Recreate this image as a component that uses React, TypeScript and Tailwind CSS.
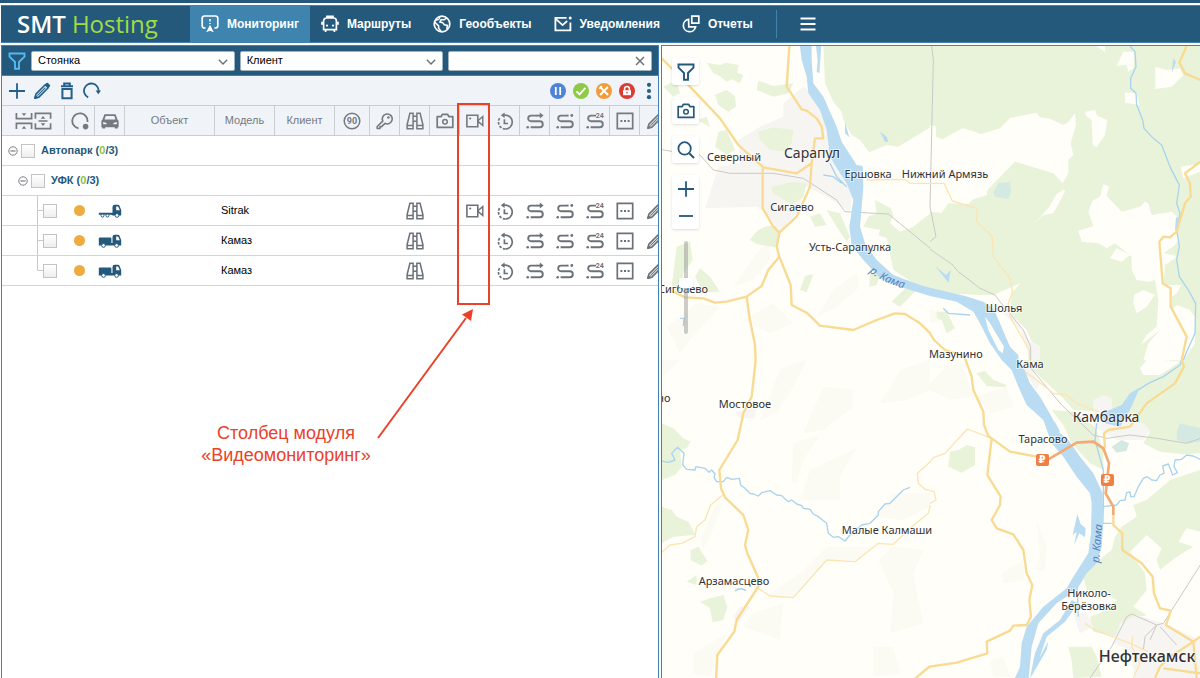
import type { ReactNode } from 'react';

type IconProps = { children: ReactNode; className?: string };

function Icon({ children, className = '' }: IconProps) {
  return (
    <svg
      viewBox="0 0 18 18"
      className={`h-[18px] w-[18px] shrink-0 ${className}`}
      fill="none"
      stroke="currentColor"
      strokeWidth="1.5"
      aria-hidden="true"
    >
      {children}
    </svg>
  );
}

const FunnelIcon = ({ className }: { className?: string }) => (
  <Icon className={className}>
    <path d="M1.5 1.5h15v3.2L11 10v6.8H7V10L1.5 4.7z" strokeWidth="1.9" />
  </Icon>
);
const CameraIcon = ({ className }: { className?: string }) => (
  <Icon className={className}>
    <path d="M1.2 15.4V4.6h4L6.3 2.4h5.4l1.1 2.2h4v10.8z" strokeWidth="1.7" strokeLinejoin="round" />
    <circle cx="9" cy="9.8" r="2.3" />
  </Icon>
);
const SearchIcon = () => (
  <Icon>
    <circle cx="7.6" cy="7.4" r="6.2" strokeWidth="1.8" />
    <path d="M12 12l5 5" strokeWidth="2" />
  </Icon>
);
const PlusIcon = () => (
  <Icon>
    <path d="M9 1.2v15.6M1 9h16" strokeWidth="1.8" />
  </Icon>
);
const MinusIcon = () => (
  <Icon>
    <path d="M2 9h14" strokeWidth="1.8" />
  </Icon>
);
const PencilIcon = () => (
  <Icon>
    <path d="M1.9 16.1l1-4L12.2 2.8l3 3L5.9 15.1z" strokeWidth="1.6" strokeLinejoin="round" />
    <path d="M4.4 13.6l8-8" strokeWidth="1.1" />
    <path d="M11.8 2.4l1.6-1.5q.8-.6 1.6.2l1.9 1.9q.7.8 0 1.6l-1.5 1.5z" fill="currentColor" stroke="none" />
    <path d="M1 17l1.2-4.4 3.2 3.2z" fill="currentColor" stroke="none" />
  </Icon>
);
const TrashIcon = () => (
  <Icon>
    <path d="M3 4.2h12M6.2 3.6V1.5h5.6v2.1" strokeWidth="2" />
    <path d="M4.4 7h9.2v9.3H4.4z" strokeWidth="2" />
  </Icon>
);
const ReloadIcon = () => (
  <Icon>
    <path d="M5.2 15.4A7.3 7.3 0 1 1 15.6 9.4" strokeWidth="1.8" />
    <path d="M12.6 8.4h5.4l-2.7 3.8z" fill="currentColor" stroke="none" />
  </Icon>
);
const CollapseIcon = () => (
  <Icon>
    <path d="M1.4 1v5.6h15.2V1M1.4 17v-5.6h15.2V17" strokeWidth="1.7" />
    <path d="M6.7 1.2h4.6L9 4zM6.7 16.8h4.6L9 14z" fill="currentColor" stroke="none" />
  </Icon>
);
const ExpandIcon = () => (
  <Icon>
    <path d="M1.4 6.8V1.4h15.2v5.4M1.4 11.2v5.4h15.2v-5.4M4.5 9h9" strokeWidth="1.7" />
    <path d="M6.7 6.8h4.6L9 4zM6.7 11.2h4.6L9 14z" fill="currentColor" stroke="none" />
  </Icon>
);
const StateIcon = () => (
  <Icon>
    <path d="M7.6 16.4A7.6 7.6 0 1 1 16.4 10" strokeWidth="1.8" />
    <circle cx="14.6" cy="14.6" r="2.8" fill="currentColor" stroke="none" />
  </Icon>
);
const CarIcon = () => (
  <Icon>
    <path
      d="M3.4 2.2h11.2l1.9 5.2 1.1 1.4v6.4h-.9v1.3h-2.9v-1.3H4.2v1.3H1.3v-1.3H.4V8.8l1.1-1.4zM4.7 4L3.5 7.4h11L13.3 4zM2.2 10v2.2h3.4v-1.3zM15.8 10v2.2h-3.4v-1.3z"
      fill="currentColor"
      fillRule="evenodd"
      stroke="none"
    />
  </Icon>
);
const NinetyIcon = () => (
  <Icon>
    <circle cx="9" cy="9" r="7.8" />
    <text x="9" y="12" textAnchor="middle" className="font-['Roboto'] text-[9px] font-bold" fill="currentColor" stroke="none">
      90
    </text>
  </Icon>
);
const KeyIcon = () => (
  <Icon>
    <path d="M6.8 9.2A5 5 0 1 1 9 11.4L5.6 14.6H4v1.9H1.2v-2z" strokeWidth="1.6" strokeLinejoin="round" />
    <circle cx="12.4" cy="5.5" r="1.3" fill="currentColor" stroke="none" />
  </Icon>
);
const BinocularsIcon = () => (
  <Icon>
    <path d="M3.9 1.3h3.2v15.4H1.1v-4zM14.1 1.3h-3.2v15.4h6v-4zM1.3 13.4h5.6M11.1 13.4h5.6M7.2 4.2h3.6M7.2 9.2h3.6" />
  </Icon>
);
const VideoIcon = () => (
  <Icon>
    <path d="M.9 3.2h10.9v11.6H.9z" strokeWidth="1.6" />
    <path d="M12.4 8.2l4.4-3.6v8.8l-4.4-3.6z" strokeWidth="1.4" />
    <circle cx="4.2" cy="6.5" r="1.1" fill="currentColor" stroke="none" />
  </Icon>
);
const HistoryIcon = () => (
  <Icon>
    <path d="M7.5 3.2H9.4A6.9 6.9 0 0 1 9.4 17" strokeWidth="1.7" />
    <path d="M9.4 17A6.9 6.9 0 0 1 2.5 10 6.9 6.9 0 0 1 4 5.6" strokeWidth="1.7" strokeDasharray="2.6 1.5" />
    <path d="M8.6.5v5.4L4.8 3.2z" fill="currentColor" stroke="none" />
    <path d="M8.4 7.2v4.3H12" strokeWidth="1.7" />
  </Icon>
);
const RouteBase = () => (
  <>
    <circle cx="1.7" cy="15.2" r="1.3" fill="currentColor" stroke="none" />
    <path d="M4.6 15.2h9.2a3 3 0 0 0 0-6H5a2.7 2.7 0 0 1 0-5.6h5" strokeWidth="1.9" />
  </>
);
const RouteIcon = () => (
  <Icon>
    <RouteBase />
    <path d="M10 3.6h5" strokeWidth="1.9" />
    <path d="M13.8.6v6l3.8-3z" fill="currentColor" stroke="none" />
  </Icon>
);
const RoutePointIcon = () => (
  <Icon>
    <RouteBase />
    <path d="M10 3.6h2.6" strokeWidth="1.9" />
    <circle cx="15.8" cy="3.5" r="1.4" fill="currentColor" stroke="none" />
  </Icon>
);
const RouteDayIcon = () => (
  <Icon>
    <RouteBase />
    <text x="9.8" y="5.8" className="font-['Roboto'] text-[7px] font-bold" fill="currentColor" stroke="none">
      24
    </text>
  </Icon>
);
const MoreBoxIcon = () => (
  <Icon>
    <path d="M1.3 1.3h15.4v15.4H1.3z" strokeWidth="1.7" />
    <path d="M4.4 9h2M8 9h2M11.6 9h2" strokeWidth="2" />
  </Icon>
);

const MonitorIcon = () => (
  <Icon>
    <path d="M4.6 13H3.4a2.2 2.2 0 0 1-2.2-2.2V3.2A2.2 2.2 0 0 1 3.4 1h11.2a2.2 2.2 0 0 1 2.2 2.2v7.6a2.2 2.2 0 0 1-2.2 2.2h-1.2" strokeWidth="1.7" />
    <path d="M9 4v2.6M9 8v1" strokeWidth="1.5" />
    <path d="M9 9.8l3.8 7.4L9 15.8l-3.8 1.4z" fill="currentColor" stroke="none" />
  </Icon>
);
const BusIcon = () => (
  <Icon>
    <path d="M6 3V1.4h6V3M5.6 3h6.8a3 3 0 0 1 3 3v8.6H2.6V6a3 3 0 0 1 3-3zM1 6.8v3M17 6.8v3M4.6 15v2M13.4 15v2" strokeWidth="1.7" />
    <circle cx="6" cy="10.6" r="1.1" fill="currentColor" stroke="none" />
    <circle cx="12" cy="10.6" r="1.1" fill="currentColor" stroke="none" />
  </Icon>
);
const GlobeIcon = () => (
  <Icon>
    <circle cx="9" cy="9" r="7.8" strokeWidth="1.7" />
    <path d="M1.6 7l4 3.8v2.4l2.6 3.4M13.8 3L11 4.8 8.2 4.6 7 7l2.6.6 1.8 2.2 3 .6-.6 3.6" strokeWidth="1.6" />
    <path d="M7.2 1.6L5.8 4.4l-3 1" strokeWidth="1.2" />
  </Icon>
);
const MailIcon = () => (
  <Icon>
    <path d="M12.6 2.8H1.4v12.6h15V7.4" strokeWidth="1.8" />
    <path d="M2 4.2l6.6 6 4.6-4.2" strokeWidth="1.7" />
    <circle cx="16.2" cy="3" r="1.5" fill="currentColor" stroke="none" />
  </Icon>
);
const ReportIcon = () => (
  <Icon>
    <path d="M6.6 4.4A6.2 6.2 0 1 0 13.6 11.8H6.8z" strokeWidth="1.7" />
    <path d="M9.8 1.2h7v7h-7z" strokeWidth="1.7" />
  </Icon>
);

const navItems = [
  { label: 'Мониторинг', icon: <MonitorIcon />, active: true },
  { label: 'Маршруты', icon: <BusIcon /> },
  { label: 'Геообъекты', icon: <GlobeIcon /> },
  { label: 'Уведомления', icon: <MailIcon /> },
  { label: 'Отчеты', icon: <ReportIcon /> },
];

function Header() {
  return (
    <header className="mt-0.5 ml-px flex h-[38px] shrink-0 items-stretch border-t border-b border-[#3f84ae] bg-[#25597c] text-white">
      <a href="#" className="flex w-[189px] items-center gap-1.5 pl-4 font-['Open_Sans'] text-2xl leading-none font-semibold">
        <span>SMT</span>
        <span className="font-medium text-[#a2dc45]">Hosting</span>
      </a>
      <nav className="flex items-stretch text-xs font-bold">
        {navItems.map((item) => (
          <a
            key={item.label}
            href="#"
            className={`flex items-center gap-2 px-[11px] ${item.active ? 'bg-[#3e84af]' : ''}`}
          >
            {item.icon}
            {item.label}
          </a>
        ))}
      </nav>
      <div className="my-1 ml-3 w-px bg-[#3f84ae]" />
      <button type="button" aria-label="Меню" className="ml-[22px] flex items-center">
        <Icon>
          <path d="M1.5 3.6h15M1.5 9h15M1.5 14.4h15" strokeWidth="2" />
        </Icon>
      </button>
    </header>
  );
}

function FilterSelect({ label, value }: { label: string; value: string }) {
  return (
    <div className="relative min-w-0 flex-1">
      <select aria-label={label} className="block h-5 w-full appearance-none rounded-xs border border-[#9fb4c2] bg-white px-1.5 text-[11px] text-black">
        <option>{value}</option>
      </select>
      <svg viewBox="0 0 10 6" className="pointer-events-none absolute top-2 right-[7px] h-1.5 w-2.5" fill="none" stroke="#6b7178" strokeWidth="1.4" aria-hidden="true">
        <path d="M.8.8L5 5 9.2.8" />
      </svg>
    </div>
  );
}

function Filters() {
  return (
    <div className="flex h-[30px] shrink-0 items-center gap-[5px] border-b border-[#3f84ae] bg-[#25597c] pr-1.5 pl-1.5">
      <button type="button" aria-label="Фильтр" className="text-[#56b8f2]">
        <FunnelIcon />
      </button>
      <FilterSelect label="Состояние" value="Стоянка" />
      <FilterSelect label="Поле поиска" value="Клиент" />
      <div className="relative min-w-0 flex-1">
        <input aria-label="Поиск" type="text" className="block h-5 w-full rounded-xs border border-[#9fb4c2] bg-white pr-5 pl-1.5 text-[11px]" />
        <button type="button" aria-label="Очистить" className="absolute top-1 right-1.5">
          <svg viewBox="0 0 12 12" className="h-3 w-3" stroke="#6b7178" strokeWidth="1.5" aria-hidden="true">
            <path d="M2 2l8 8M10 2l-8 8" />
          </svg>
        </button>
      </div>
    </div>
  );
}

const statuses = [
  { label: 'Пауза', color: 'bg-[#4f83d9]', path: <path d="M6.8 5v8M11.2 5v8" strokeWidth="1.8" /> },
  { label: 'Норма', color: 'bg-[#8fca47]', path: <path d="M4.5 9.4l3 3 6-6.6" strokeWidth="1.8" /> },
  { label: 'Ремонт', color: 'bg-[#f19c38]', path: <path d="M5.6 5.4l7.4 7.6M12.8 5l-7.6 8M4.3 6.7l2.6-2.4" strokeWidth="2" /> },
  {
    label: 'Блокировка',
    color: 'bg-[#dc3b31]',
    path: (
      <>
        <path d="M5 8.2h8v5H5z" fill="currentColor" stroke="none" />
        <path d="M6.6 8.4V6.8a2.4 2.4 0 0 1 4.8 0v1.6" />
        <path d="M9 9.8v1.6" stroke="#dc3b31" strokeWidth="1.2" />
      </>
    ),
  },
];

function Toolbar() {
  return (
    <div className="flex h-[29px] shrink-0 items-center justify-between bg-[#f0f4f8] pr-1.5 pl-1.5 text-[#235f88]">
      <div className="flex items-center gap-[7px]">
        <button type="button" aria-label="Добавить"><PlusIcon /></button>
        <button type="button" aria-label="Изменить"><PencilIcon /></button>
        <button type="button" aria-label="Удалить"><TrashIcon /></button>
        <button type="button" aria-label="Обновить"><ReloadIcon /></button>
      </div>
      <div className="flex items-center gap-[7px]">
        {statuses.map((s) => (
          <button key={s.label} type="button" aria-label={s.label} className={`flex h-4 w-4 items-center justify-center rounded-full text-white ${s.color}`}>
            <Icon>{s.path}</Icon>
          </button>
        ))}
        <button type="button" aria-label="Ещё" className="ml-1">
          <svg viewBox="0 0 6 18" className="h-[18px] w-1.5" fill="currentColor" aria-hidden="true">
            <circle cx="3" cy="2.8" r="2.1" />
            <circle cx="3" cy="9" r="2.1" />
            <circle cx="3" cy="15.2" r="2.1" />
          </svg>
        </button>
      </div>
    </div>
  );
}

function TreeToggle({ label }: { label: string }) {
  return (
    <button type="button" aria-label={label}>
      <svg viewBox="0 0 10 10" className="h-2.5 w-2.5" fill="none" stroke="#7b8085" aria-hidden="true">
        <circle cx="5" cy="5" r="4.2" />
        <path d="M2.4 5h5.2" strokeWidth="1.2" />
      </svg>
    </button>
  );
}

function Check({ label }: { label: string }) {
  return (
    <input
      type="checkbox"
      aria-label={label}
      className="h-3.5 w-3.5 shrink-0 appearance-none border border-[#c3c3c3] bg-linear-to-b from-white to-[#eeeeee] checked:bg-[#3e84af]"
    />
  );
}

const TractorTruck = () => (
  <svg viewBox="0 0 24 14" className="h-3.5 w-6" fill="#25597c" aria-hidden="true">
    <path d="M14.5 9V3q0-2.2 2.2-2.2h3.2q1.3 0 1.8 1.4L23.2 6v5.6h-8.4L13 10.8H.8V8.8h13.7z" />
    <path d="M18.2 2.6v3.6h3.6L20.4 3q-.2-.4-.6-.4z" fill="#fff" />
    <circle cx="4.5" cy="11.6" r="1.5" fill="#fff" stroke="#25597c" strokeWidth="1" />
    <circle cx="9.5" cy="11.6" r="1.5" fill="#fff" stroke="#25597c" strokeWidth="1" />
    <circle cx="19" cy="11.4" r="1.9" fill="#fff" stroke="#25597c" strokeWidth="1" />
  </svg>
);
const BoxTruck = () => (
  <svg viewBox="0 0 24 14" className="h-3.5 w-6" fill="#25597c" aria-hidden="true">
    <path d="M14.5 9V3q0-2.2 2.2-2.2h3.2q1.3 0 1.8 1.4L23.2 6v5.6H.8V4.6q0-1 1-1h10.6q1 0 1 1V9z" />
    <path d="M18.2 2.6v3.6h3.6L20.4 3q-.2-.4-.6-.4z" fill="#fff" />
    <circle cx="5.5" cy="11.4" r="1.9" fill="#fff" stroke="#25597c" strokeWidth="1" />
    <circle cx="18.6" cy="11.4" r="1.9" fill="#fff" stroke="#25597c" strokeWidth="1" />
  </svg>
);

function GroupRow({ name, nested = false }: { name: string; nested?: boolean }) {
  return (
    <tr className="h-[30px]">
      <td colSpan={17} className="border-b border-[#d4d4d4] p-0">
        <div className={`flex items-center gap-[3px] ${nested ? 'pl-4' : 'pl-1.5'}`}>
          <TreeToggle label={`Свернуть ${name}`} />
          <Check label={name} />
          <span className="ml-[3px] font-bold text-[#25597c]">
            {name} (<span className="text-[#8dc63f]">0</span>/3)
          </span>
        </div>
      </td>
    </tr>
  );
}

function ActionCell({ label, children }: { label: string; children?: ReactNode }) {
  return (
    <td className="border-b border-[#d4d4d4] p-0 text-[#6b7178]">
      {children && (
        <button type="button" aria-label={label} className="mx-auto block">
          {children}
        </button>
      )}
    </td>
  );
}

const vehicles = [
  { id: 1, model: 'Sitrak', tractor: true, video: true },
  { id: 2, model: 'Камаз', tractor: false, video: false },
  { id: 3, model: 'Камаз', tractor: false, video: false },
];

const headCell = 'border-t border-r border-b border-[#cbced1] bg-[#f0f4f8] p-0 font-normal';

const iconColumns = [
  { label: 'Скорость', icon: <NinetyIcon /> },
  { label: 'Зажигание', icon: <KeyIcon /> },
  { label: 'Слежение', icon: <BinocularsIcon /> },
  { label: 'Фото', icon: <CameraIcon /> },
  { label: 'Видео', icon: <VideoIcon /> },
  { label: 'История', icon: <HistoryIcon /> },
  { label: 'Маршрут', icon: <RouteIcon /> },
  { label: 'Маршрут до точки', icon: <RoutePointIcon /> },
  { label: 'Маршрут за сутки', icon: <RouteDayIcon /> },
  { label: 'Команды', icon: <MoreBoxIcon /> },
];

function ObjectTable() {
  return (
    <div className="overflow-hidden">
      <table className="w-[668px] table-fixed border-separate border-spacing-0 text-[11px] text-black">
        <colgroup>
          <col className="w-[63px]" />
          <col className="w-[30px]" />
          <col className="w-[30px]" />
          <col className="w-[90px]" />
          <col className="w-[60px]" />
          <col className="w-[60px]" />
          <col className="w-[35px]" />
        </colgroup>
        <thead className="text-[#747a80]">
          <tr className="h-[31px]">
            <th className={headCell}>
              <div className="flex items-center justify-center gap-px">
                <button type="button" aria-label="Свернуть все"><CollapseIcon /></button>
                <button type="button" aria-label="Развернуть все"><ExpandIcon /></button>
              </div>
            </th>
            <th className={headCell} aria-label="Состояние"><div className="flex justify-center"><StateIcon /></div></th>
            <th className={headCell} aria-label="Тип"><div className="flex justify-center"><CarIcon /></div></th>
            <th className={headCell}>Объект</th>
            <th className={headCell}>Модель</th>
            <th className={headCell}>Клиент</th>
            {iconColumns.map((c) => (
              <th key={c.label} className={headCell} aria-label={c.label}>
                <div className="flex justify-center">{c.icon}</div>
              </th>
            ))}
            <th className={headCell} aria-label="Изменить"><div className="flex justify-center"><PencilIcon /></div></th>
          </tr>
        </thead>
        <tbody>
          <GroupRow name="Автопарк" />
          <GroupRow name="УФК" nested />
          {vehicles.map((v, i) => (
            <tr key={v.id} className="h-[30px]">
              <td className="border-b border-[#d4d4d4] p-0">
                <div className="flex items-center pl-[35px]">
                  <svg viewBox="0 0 6 29" className="h-[29px] w-1.5" fill="none" stroke="#c9c9c9" aria-hidden="true">
                    <path d={i === vehicles.length - 1 ? 'M.5 0v14.5H6' : 'M.5 0v29M.5 14.5H6'} />
                  </svg>
                  <Check label={`${v.model} ${v.id}`} />
                </div>
              </td>
              <td className="border-b border-[#d4d4d4] p-0 pr-0.5"><span className="mx-auto block h-[11px] w-[11px] rounded-full bg-[#ecac3f]" /></td>
              <td className="border-b border-[#d4d4d4] p-0"><div className="flex justify-center">{v.tractor ? <TractorTruck /> : <BoxTruck />}</div></td>
              <td className="border-b border-[#d4d4d4] p-0" />
              <td className="border-b border-[#d4d4d4] p-0 pl-1.5">{v.model}</td>
              <td className="border-b border-[#d4d4d4] p-0" />
              <td className="border-b border-[#d4d4d4] p-0" />
              <td className="border-b border-[#d4d4d4] p-0" />
              <ActionCell label="Слежение"><BinocularsIcon /></ActionCell>
              <td className="border-b border-[#d4d4d4] p-0" />
              <ActionCell label="Видео">{v.video ? <VideoIcon /> : null}</ActionCell>
              <ActionCell label="История"><HistoryIcon /></ActionCell>
              <ActionCell label="Маршрут"><RouteIcon /></ActionCell>
              <ActionCell label="Маршрут до точки"><RoutePointIcon /></ActionCell>
              <ActionCell label="Маршрут за сутки"><RouteDayIcon /></ActionCell>
              <ActionCell label="Команды"><MoreBoxIcon /></ActionCell>
              <ActionCell label="Изменить"><PencilIcon /></ActionCell>
            </tr>
          ))}
        </tbody>
      </table>
    </div>
  );
}

function Callout() {
  return (
    <>
      <div className="pointer-events-none absolute top-[57px] left-[455px] h-[202px] w-[33px] border-2 border-[#ea4228]" />
      <svg viewBox="0 0 100 134" className="pointer-events-none absolute top-[261px] left-[373px] h-[134px] w-[100px]" aria-hidden="true">
        <path d="M3 131L91 11" stroke="#ea4228" strokeWidth="2" />
        <path d="M98 2L96 14 87 7.5z" fill="#ea4228" />
      </svg>
      <p className="absolute top-[376px] left-[184px] w-[200px] text-center text-lg leading-[22px] text-[#ea4228]">
        Столбец модуля «Видеомониторинг»
      </p>
    </>
  );
}

/* Map tiles are laid out as a 2x2 grid; every tile is 810x960 map units. */
function Tiles({ tiles }: { tiles: [string, string, string, string] }) {
  return (
    <>
      <path d={tiles[0]} />
      <path d={tiles[1]} transform="translate(810 0)" />
      <path d={tiles[2]} transform="translate(0 960)" />
      <path d={tiles[3]} transform="translate(810 960)" />
    </>
  );
}

const faint: [string, string, string, string] = [
  'M250 840L340 790 400 850 330 880zM20 860L110 790 180 800 90 900 60 940zM470 830L520 750 590 700 600 740 530 800zM290 640L330 600 330 660 280 720 220 740z',
  'M0 810L35 815 30 845 0 850z',
  'M300 180L360 30 400 10 440 0 400 80 350 160zM430 220L490 80 540 85 580 90 580 140 530 180 490 210zM395 370L400 250 480 225 430 300 410 370zM420 420L450 330 590 265 540 350 540 420zM660 130L720 30 810 0V90L740 120zM640 470L700 400 810 400V440L730 480zM300 720L420 640 500 560 640 560 600 600 500 600 400 710zM655 600L700 560 790 570 760 640 790 790 690 820 700 700zM640 860L700 860 720 940 640 950zM100 880L200 820 150 950 100 940zM280 760L370 730 360 840 250 800zM120 540L170 430 190 430 150 530 130 565zM0 60L60 0H0z',
  'M0 70L60 10 100 20 130 110 60 120 0 90zM140 110L230 80 250 140 180 160zM320 480L350 560 345 630 310 630 330 590zM215 640L280 600 285 660 220 670zM180 900L220 890 240 950 190 950z',
];

const greens: [string, string, string, string] = [
  'M490 18H811V262L715 320 680 315 628 337 600 300 575 285 550 240 545 215 520 185 495 130zM645 480L693 505 700 525 690 550 720 575 760 560 811 520V745L770 735 700 690 690 640 680 595 670 590 655 585 660 570 610 560 625 530 650 520zM140 68L180 75 200 68 235 75 232 98 250 105 240 130 215 118 200 125 180 108 160 100zM165 165L200 150 225 168 228 200 205 215 175 195zM290 150L295 122 340 138 400 130 385 160 340 170zM295 275L340 262 400 270 395 310 375 335 330 330 300 300zM335 440L400 425 440 430 430 470 395 495 365 475 338 460zM270 600Q300 550 350 558L360 590 345 622 290 612zM500 510L540 520 570 590 560 605 530 560zM450 530L480 520 500 555 465 560zM50 620L90 605 98 660 70 700 60 760 35 740zM120 685L150 710 180 755 130 757 105 710zM420 750L435 708 460 703 440 757zM630 700L660 705 650 735 628 740zM695 785L740 740 770 750 720 800zM10 140L50 120 60 160 40 170zM175 275L200 270 225 330 200 345 165 320zM110 240L140 230 150 260z',
  'M0 18H810V961H325L330 920 305 905 290 870 240 820 245 760 270 730 190 765 150 765 50 760 0 745z',
  'M6 190L40 205 70 235 92 245 80 265 60 270 65 320 45 345 6 360zM6 440L35 450 50 470 85 485 107 525 40 530 6 550zM92 570L115 560 142 602 125 617 92 600zM80 665L110 645 110 675zM120 725L150 715 190 705 202 740 190 780 158 787 150 745z',
  'M275 0H810V280L760 283 690 275 640 250 660 215 640 195 560 215 500 200 500 155 430 150 395 110 330 50zM365 150L430 155 495 200 520 270 520 330 480 310 425 250 400 195zM810 330L720 360 650 420 610 435 620 470 575 500 555 530 545 570 500 605 460 650 470 690 520 700 560 720 510 760 480 770 490 815 560 830 600 780 650 765 610 740 650 690 645 640 600 575 650 525 695 565 680 600 690 630 740 590 790 560 745 545 770 505 810 515zM415 860H485L500 890 515 950 430 954 425 900zM85 270L110 255 135 262V315L95 338 55 320 60 275zM140 40L165 32 190 60 230 75 225 82 170 78z',
];

const clearings: [string, string, string, string] = [
  'M0 0',
  'M0 255L18 258V290L38 298 98 264 155 282 210 265 240 234 320 218 330 232 360 236 398 254 412 250 435 220 438 255 422 310 430 345 415 360V400L398 430 370 400 255 365 170 452 172 465 130 478 115 492 55 490 35 518 0 516zM466 215L495 210 502 228 532 240 525 285 500 322 488 315 485 240 468 228zM315 550L358 500 380 462 402 448 405 455 370 520 340 525zM445 572L490 558 475 515 487 482 510 470 520 432 537 440 530 468 575 515 630 500 645 485 655 490 665 525 725 515 742 530 740 570 745 600 735 615 700 640 740 648 735 655 705 675 700 735 755 735 740 760 725 770V810L740 795 780 810 795 830V910L760 961H640L655 910 690 870 632 915 650 885 680 860 685 780 675 720 655 725 620 720 605 690 605 650 555 610 530 625 505 610 455 605zM560 78L580 35H612L610 85 595 95 590 75zM676 80L710 90 750 85 760 105 725 140 676 147zM585 158H620L628 195 585 188zM752 380L810 372V395L760 415zM540 655L560 625 600 645 575 665zM612 765L640 750 675 765 650 800 620 820 610 790zM498 18H525V35z',
  'M0 0',
  'M630 25L650 0 700 0 750 5 690 45 640 45z',
];

const towns: [string, string, string, string] = [
  'M235 300L300 260 370 230 370 190 430 140 470 170 520 340 580 440 570 515 500 470 440 440 410 520 360 575 310 510 290 500 135 505 150 460 175 380 240 370z',
  'M220 820L240 815 300 905 330 920V961H300L270 870z',
  'M225 155L290 145 285 175 240 175zM220 770L240 740 270 740 235 790z',
  'M490 120L520 105 545 115 550 180 640 190 660 210 640 240 560 240 520 215 490 200zM570 790L620 765 700 790 810 840V954H615L600 870 550 850zM430 760L470 760 490 800 450 820zM270 0L300 20 330 70 320 90 280 30z',
];

const thinRoads: [string, string, string, string] = [
  'M620 420L735 418 750 430H811',
  'M0 430H42L67 483 142 505 140 545 187 590 190 650 240 715 248 755 235 790 240 830 298 930V961',
  'M188 405L152 435 135 480 110 500 105 530 65 550 30 555 0 582M295 685L330 708 400 713 500 600 585 605 655 550 700 553 750 505 805 460 811 435M811 305L772 340 775 370 795 388 811 392',
  'M0 305L10 293 45 280 112 207 185 235M0 392L12 395 18 420 0 430M285 35L320 60 370 100 410 105 440 130 505 155M465 790L490 808 600 850 655 875M608 830L605 860 630 910 610 954',
];

const roads: [string, string, string, string] = [
  'M0 50L90 140 180 235 235 315 310 382 410 400 455 370 465 295H490L485 260 470 235 440 212 425 208 380 140 388 18M308 385V505L340 560 358 578 410 530 450 440 455 370M358 578L350 620 358 650 392 735 395 795 440 818 480 857 580 870 650 840 705 820 735 822 780 850 811 880M358 650L325 690 305 738 260 770 200 785 165 788 130 775 75 772 40 755M260 770L268 830 285 915 287 961',
  'M0 880L12 900 45 930 95 945 108 961M755 961L770 890 722 800V745L698 730 688 605 700 590 720 592 740 575 765 490 782 470 780 430 765 400 811 365M770 18L748 68 765 100 811 120',
  'M287 0L275 110 250 160 233 240 178 330 183 385 195 412 250 465 265 510 255 555 262 580 295 655V680L230 780 223 815 172 885 168 960M760 960L811 918',
  'M107 0L125 50 130 90 160 155 162 195 175 228 185 235 240 275 320 290M185 235L172 345 212 410 210 435 185 480 200 505 250 523 280 570 290 640 307 675 298 720 303 770 290 795 250 797 240 812 170 845 172 880 80 908 0 920M550 465V495L577 520V570L635 610 668 650 672 700 690 745 722 752 708 795 790 845 811 830M525 265L522 220 535 210 600 200 650 130 735 70 762 20 755 0M790 845L720 890 690 920 675 954M790 845L800 954M700 925L811 940',
];

const rails: [string, string, string, string] = [
  'M0 328L40 335 120 345 160 390 210 400H340L430 415 530 480 555 515 685 522 811 625',
  'M5 18L10 60 0 500 18 590 0 605M0 628L65 672 85 695 150 745 195 765 210 785 280 870 302 920V961',
  'M0 0',
  'M290 10L395 135 490 225 530 235 600 225 680 235 770 250 811 235M480 954L545 860 590 770 605 762 680 795 700 790 811 615M680 795L645 830 640 870M690 800L740 855M680 795L660 840',
];

const streams: [string, string, string, string] = [
  'M490 405L520 410 545 430M510 370L530 410 560 440M60 835L72 835 70 858',
  'M600 18L615 35 618 80 602 115V145L618 160 620 195 638 240 642 265 670 295 695 315 720 380 735 410 748 435 740 490 750 520 740 570 748 620 740 660 748 710 775 750 797 790 795 880 770 935 760 961M40 805L55 820 120 825',
  'M0 302L25 307 45 300 35 280 52 262 72 280 68 315 80 328 105 330 108 320 135 325 147 337 155 330 165 342 162 352 170 365 190 365 200 352 215 358 238 355 242 375 255 385 270 400 280 402 295 408 305 398 330 392 350 405 365 407 385 425 395 420 410 432 425 437 430 445 450 448 460 462 475 470 500 490 505 520 520 532 535 530 555 543 570 525 605 495 630 490 655 465V455L675 432 690 430 730 390 750 382M225 693Q240 680 258 692',
  'M755 0L750 15 700 50 655 70 625 90M518 440L560 435 570 422 585 420 590 398 600 396 602 410 612 410 625 380 640 355 652 350 665 360 680 362 690 345 702 340 698 318 715 312 728 345 742 338 732 320 735 300 755 298 770 285 790 288 811 298M500 190L495 240 520 330 520 440 518 490H545M440 640L445 770',
];

const waterBodies =
  'M420 18H455V60L460 130 490 170 530 260 545 305 590 375 608 378 610 440 605 500 600 560 615 610 650 660 700 705 780 735 810 743 915 768 970 785 1000 805 1020 850 1050 920 1075 945 1075 960 1090 980 1110 1030 1140 1070 1175 1130 1195 1175 1225 1200 1260 1250 1300 1300 1328 1360 1330 1440 1325 1520 1310 1570 1280 1600 1250 1650 1190 1690 1135 1750 1115 1820 1106 1914H1065L1080 1880 1085 1810 1100 1760 1150 1700 1220 1645 1240 1610 1285 1540 1293 1480 1295 1390 1290 1360 1250 1310 1210 1250 1175 1210 1150 1140 1100 1095 1075 1040 1055 990 1025 960 990 910 960 850 940 815 890 785 810 768 720 740 660 715 610 660 575 615 568 560 580 480 560 430 540 400 510 350 500 270 480 210 445 160 440 110 425 60z' +
  'M468 18H484L478 100 470 95 473 60zM555 245L568 292 555 280z' +
  'M1110 1914L1125 1840 1150 1780 1200 1740 1235 1680 1255 1690 1215 1745 1160 1790 1140 1850 1120 1900z' +
  'M1120 1890L1165 1803 1160 1830 1125 1890zM1440 1042L1410 1060 1385 1095 1325 1120 1335 1150 1380 1160 1410 1110z' +
  'M1252 1422L1262 1452 1277 1465 1275 1492 1258 1480 1242 1515 1250 1475 1238 1485zM1182 1140L1200 1175 1190 1180zM825 678L858 705 872 690 866 728zM1540 55L1548 65 1535 100z' +
  'M660 275L680 290 685 305 675 305zM1548 530L1560 540 1552 575 1545 570z';

type Label = { text: string; x: number; y: number; kind?: 'city' | 'big' };

const mapLabels: Label[] = [
  { text: 'Северный', x: 734, y: 161 },
  { text: 'Сарапул', x: 812, y: 158, kind: 'city' },
  { text: 'Ершовка', x: 868, y: 178 },
  { text: 'Нижний Армязь', x: 945, y: 178 },
  { text: 'Сигаево', x: 792, y: 211 },
  { text: 'Усть-Сарапулка', x: 850, y: 251 },
  { text: 'Сигбаево', x: 683, y: 293 },
  { text: 'Шолья', x: 1004, y: 312 },
  { text: 'Мазунино', x: 956, y: 358 },
  { text: 'Кама', x: 1030, y: 368 },
  { text: 'Мостовое', x: 745, y: 408 },
  { text: 'но', x: 664, y: 402 },
  { text: 'Камбарка', x: 1106, y: 422, kind: 'city' },
  { text: 'Тарасово', x: 1043, y: 443 },
  { text: 'Малые Калмаши', x: 887, y: 534 },
  { text: 'Арзамасцево', x: 734, y: 585 },
  { text: 'Николо-', x: 1089, y: 597 },
  { text: 'Берёзовка', x: 1089, y: 610 },
  { text: 'Нефтекамск', x: 1147, y: 662, kind: 'big' },
];

const labelSize = {
  town: 'text-[11px]',
  city: 'text-[14px]',
  big: 'text-[16px] font-medium',
};

function MapCanvas() {
  return (
    <svg viewBox="662 46 538 632" preserveAspectRatio="xMinYMin slice" className="h-full w-full" role="img" aria-label="Карта">
      <g transform="translate(660 40) scale(0.333333)" fill="none" strokeLinejoin="round">
        <g fill="#fbfbf3"><Tiles tiles={faint} /></g>
        <g fill="#e9f3da"><Tiles tiles={greens} /></g>
        <g fill="#fffef8"><Tiles tiles={clearings} /></g>
        <g fill="#f7f5f1"><Tiles tiles={towns} /></g>
        <path d="M295 275L340 262 400 270 395 310 375 335 330 330 300 300zM335 440L400 425 440 430 430 470 395 495 365 475 338 460z" fill="#e9f3da" />
        <path d="M830 815L860 815 885 865 860 880 845 840 830 835z" fill="#e9f3da" />
        <path d="M1000 455L1015 430 1050 425 1053 455 1045 478 1005 470zM1355 1220L1385 1200 1407 1210 1400 1232 1370 1238zM1550 1175L1560 1150 1620 1165V1205L1585 1210 1550 1200z" fill="#d4e9e2" />
        <g stroke="#c9c9c9" strokeWidth="3"><Tiles tiles={rails} /></g>
        <g stroke="#a9d3ee" strokeWidth="4"><Tiles tiles={streams} /></g>
        <path d={waterBodies} fill="#b9dcf2" />
        <path d="M975 830L990 850 1032 920 1028 940 1015 930 985 870z" fill="#fffef8" />
        <g stroke="#fbe5b4" strokeWidth="4"><Tiles tiles={thinRoads} /></g>
        <g stroke="#f9da92" strokeWidth="7"><Tiles tiles={roads} /></g>
        <path d="M1165 1258L1250 1208 1300 1205 1330 1225 1347 1270 1337 1360 1360 1400V1425" stroke="#f3aa74" strokeWidth="8" />
      </g>
      <g className="font-['Noto_Sans']" fill="#333333" stroke="#ffffff" strokeWidth="2" strokeOpacity="0.6" textAnchor="middle" paintOrder="stroke">
        {mapLabels.map((l) => (
          <text key={l.text} x={l.x} y={l.y} className={labelSize[l.kind ?? 'town']}>
            {l.text}
          </text>
        ))}
      </g>
      <g className="font-['Noto_Sans'] text-[11px] italic" fill="#5580bd">
        <path id="river-north" d="M869 272Q888 286 915 291" fill="none" />
        <path id="river-south" d="M1099 563L1103 515" fill="none" />
        <text><textPath href="#river-north">р. Кама</textPath></text>
        <text><textPath href="#river-south">р. Кама</textPath></text>
      </g>
      {[
        [1036, 454],
        [1101, 474],
      ].map(([x, y]) => (
        <g key={x}>
          <rect x={x} y={y} width="13" height="12" rx="2" fill="#f07f45" />
          <text x={x + 6} y={y + 9} textAnchor="middle" fill="#fff" className="font-['DejaVu_Sans'] text-[10px] font-bold">₽</text>
        </g>
      ))}
    </svg>
  );
}

const mapButton = 'flex h-[27px] w-[27px] items-center justify-center rounded-xs bg-white shadow-sm';

function MapPanel() {
  return (
    <section className="relative min-h-0 overflow-hidden border-t border-l border-[#3f84ae] bg-[#fffef8]">
      <MapCanvas />
      <div className="absolute top-3 left-2.5 flex flex-col items-center gap-3 text-[#25597c]">
        <button type="button" aria-label="Фильтр карты" className={mapButton}><FunnelIcon /></button>
        <button type="button" aria-label="Снимок" className={mapButton}><CameraIcon /></button>
        <button type="button" aria-label="Найти" className={mapButton}><SearchIcon /></button>
        <div className="flex flex-col rounded-xs bg-white shadow-sm">
          <button type="button" aria-label="Приблизить" className="flex h-[27px] w-[27px] items-center justify-center"><PlusIcon /></button>
          <button type="button" aria-label="Отдалить" className="flex h-[27px] w-[27px] items-center justify-center"><MinusIcon /></button>
        </div>
        <input
          type="range"
          aria-label="Масштаб"
          min="0"
          max="100"
          defaultValue="44"
          className="h-[93px] w-1 appearance-none rounded-full bg-[#999999]/50 [writing-mode:vertical-lr] [&::-webkit-slider-thumb]:h-2.5 [&::-webkit-slider-thumb]:w-3.5 [&::-webkit-slider-thumb]:appearance-none [&::-webkit-slider-thumb]:rounded-xs [&::-webkit-slider-thumb]:bg-white [&::-webkit-slider-thumb]:shadow-sm"
        />
      </div>
    </section>
  );
}

export default function App() {
  return (
    <div className="flex h-screen flex-col overflow-hidden bg-white font-['Liberation_Sans',sans-serif]">
      <div className="h-[3px] shrink-0 bg-[#25597c]" />
      <Header />
      <main className="mt-0.5 ml-px grid min-h-0 flex-1 grid-cols-[658fr_539fr] gap-0.5">
        <section className="relative flex min-w-0 flex-col overflow-hidden border-t border-r border-l border-[#3f84ae]">
          <Filters />
          <Toolbar />
          <ObjectTable />
          <Callout />
        </section>
        <MapPanel />
      </main>
    </div>
  );
}
